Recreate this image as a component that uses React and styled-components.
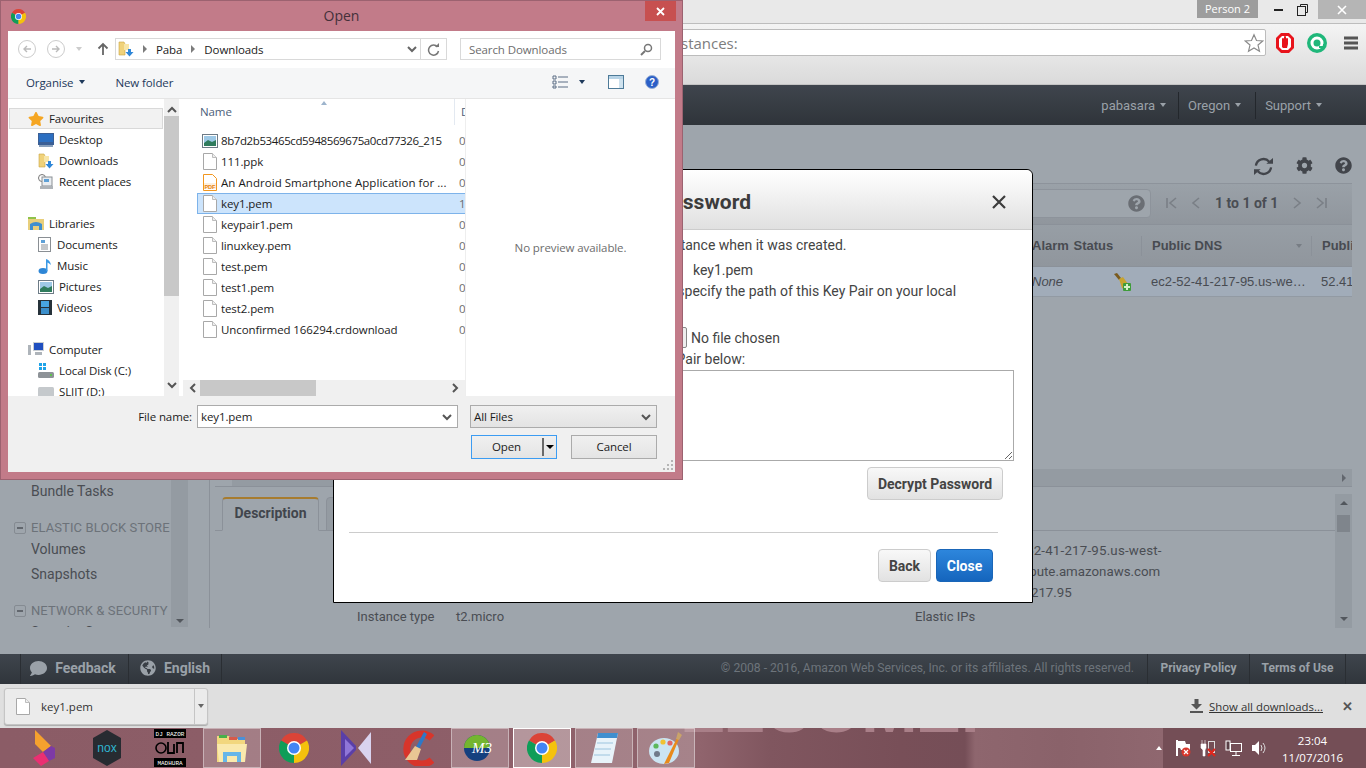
import styled, { createGlobalStyle } from 'styled-components';
import { FaCog, FaQuestionCircle, FaComment, FaGlobeAmericas, FaStar } from 'react-icons/fa';

const GlobalStyle = createGlobalStyle`
  html, body {
    margin: 0;
    padding: 0;
    overflow: hidden;
    background: #9ea5ac;
  }
`;

const Screen = styled.div`
  position: relative;
  width: 1366px;
  height: 768px;
  overflow: hidden;
  display: flex;
  flex-direction: column;
  font-family: Roboto, sans-serif;
`;

const IconGap = styled.span`
  display: flex;
  align-items: center;
  margin: ${p => p.$m || 0};
`;

/* ---------- browser chrome ---------- */

const TitleStrip = styled.div`
  height: 23px;
  background: #e9e9e9;
  display: flex;
  justify-content: flex-end;
  align-items: flex-start;
`;

const PersonBadge = styled.div`
  width: 61px;
  height: 18px;
  margin-right: 11px;
  background: #9d9d9d;
  color: #fff;
  font: 11px/18px 'Open Sans', sans-serif;
  text-align: center;
`;

const WinCtl = styled.div`
  width: ${p => p.$w}px;
  height: 19px;
  background: ${p => p.$bg || 'transparent'};
  display: flex;
  align-items: center;
  justify-content: center;
`;

const Toolbar = styled.div`
  height: 62px;
  border-top: 1px solid #bdbdbd;
  border-bottom: 1px solid #c4c4c4;
  box-sizing: border-box;
  background: linear-gradient(#f4f4f4, #dadada);
  display: flex;
  align-items: flex-start;
  padding-top: 5px;
`;

const AddressBar = styled.div`
  width: 1166px;
  height: 27px;
  margin-left: 100px;
  box-sizing: border-box;
  background: #fff;
  border: 1px solid #bcbcbc;
  border-radius: 2px;
  padding-left: 567px;
  display: flex;
  align-items: center;
  justify-content: space-between;
  color: #7d7d7d;
  font: 15px 'Open Sans', sans-serif;
`;

const ToolbarIcons = styled.div`
  display: flex;
  align-items: center;
  height: 27px;
  margin-left: 9px;
  gap: 12px;
`;

/* ---------- aws console ---------- */

const AwsHeader = styled.div`
  height: 40px;
  background: linear-gradient(#3f454d, #2f343a);
  display: flex;
  justify-content: flex-end;
  align-items: center;
  padding-right: 44px;
  color: #9aa1a8;
  font-size: 13px;
`;

const HeaderMenu = styled.div`
  display: flex;
  align-items: center;
  height: 27px;
  gap: 5px;
  padding-left: ${p => (p.$first ? 0 : 9)}px;
  margin-left: ${p => p.$ml || 12}px;
  border-left: ${p => (p.$first ? 'none' : '1px solid #23272c')};
`;

const Caret = styled.span`
  width: 0;
  height: 0;
  border-left: 3.5px solid transparent;
  border-right: 3.5px solid transparent;
  border-top: 4px solid ${p => p.$color || '#9aa1a8'};
`;

const AwsBody = styled.div`
  height: 529px;
  background: #9ea5ac;
  display: flex;
  align-items: flex-start;
`;

const Sidebar = styled.div`
  width: 188px;
  height: 502px;
  display: flex;
  flex-shrink: 0;
`;

const NavList = styled.div`
  width: 171px;
  height: 502px;
  overflow: hidden;
  box-sizing: border-box;
  padding-top: 354px;
  color: #4a4d53;
  font-size: 14px;
  white-space: nowrap;
`;

const NavLink = styled.div`
  height: 25px;
  line-height: 25px;
  padding-left: 31px;
`;

const NavGroup = styled.div`
  display: flex;
  align-items: center;
  height: 21px;
  box-sizing: border-box;
  padding: 2px 0 0 14px;
  margin-top: 12px;
  gap: 5px;
  color: #6c7279;
  font-size: 13px;
  letter-spacing: 0.1px;
`;

const Collapse = styled.span`
  width: 10px;
  height: 10px;
  border: 1px solid #858b92;
  border-radius: 2px;
  display: flex;
  align-items: center;
  justify-content: center;
  flex-shrink: 0;

  &::before {
    content: '';
    width: 6px;
    height: 2px;
    background: #62676e;
  }
`;

const NavScroll = styled.div`
  width: 17px;
  background: #949ba2;
  position: relative;

  &::after {
    content: '';
    position: absolute;
    left: 5px;
    bottom: 4px;
    border-left: 4px solid transparent;
    border-right: 4px solid transparent;
    border-top: 4px solid #52575d;
  }
`;

const Main = styled.div`
  width: 1143px;
  height: 503px;
  margin-left: 21px;
  border-left: 1px solid #8b9199;
  display: flex;
  flex-direction: column;
  box-sizing: border-box;
`;

const ActionBar = styled.div`
  height: 59px;
  flex-shrink: 0;
  box-sizing: border-box;
  border-bottom: 1px solid #8d939b;
  display: flex;
  justify-content: flex-end;
  align-items: flex-start;
  gap: 22px;
  padding-top: 32px;
  color: #42454b;
  font-size: 17px;
`;

const FilterBar = styled.div`
  height: 41px;
  flex-shrink: 0;
  box-sizing: border-box;
  background: linear-gradient(#9aa1a8, #90969d);
  border-bottom: 1px solid #8b9199;
  padding-bottom: 2px;
  display: flex;
  align-items: center;
`;

const SearchBox = styled.div`
  width: 941px;
  height: 29px;
  box-sizing: border-box;
  border: 1px solid #8d939b;
  border-radius: 4px;
  background: #9ea5ac;
  display: flex;
  justify-content: flex-end;
  align-items: center;
  padding-right: 5px;
  color: #6a6e74;
  font-size: 17px;
`;

const Pager = styled.div`
  display: flex;
  align-items: center;
  margin-left: 14px;
  color: #4a4d53;
  font: bold 14px Roboto, sans-serif;
`;

const PagerLabel = styled.span`
  margin: 0 12px;
`;

const PagerSvg = styled.svg`
  margin-right: ${p => p.$gap || 0}px;
`;

const TableGrid = styled.div`
  display: grid;
  grid-template-columns: 822px 109px 170px 40px;
  flex-shrink: 0;
  overflow: hidden;
  white-space: nowrap;
  font: 13px 'Liberation Sans', sans-serif;
  color: #484b51;
`;

const HeadRow = styled(TableGrid)`
  height: 42px;
  box-sizing: border-box;
  background: linear-gradient(#979ea5, #90969d);
  border-bottom: 1px solid #8b9199;
  font-weight: bold;
  align-items: center;
`;

const HeadCell = styled.div`
  height: 20px;
  line-height: 20px;
  padding-left: ${p => p.$pad || 0}px;
  border-left: ${p => (p.$line ? '1px solid #8b9199' : 'none')};
  display: flex;
  align-items: center;
  justify-content: space-between;
  padding-right: 9px;
  word-spacing: ${p => p.$spread || 0}px;
`;

const DataRow = styled(TableGrid)`
  height: 30px;
  box-sizing: border-box;
  background: #a1acb9;
  border-bottom: 1px solid #929aa3;
  align-items: center;
`;

const DataCell = styled.div`
  padding-left: ${p => p.$pad || 0}px;
  font-style: ${p => (p.$italic ? 'italic' : 'normal')};
  display: flex;
  align-items: center;
  justify-content: space-between;
  padding-right: ${p => p.$right || 0}px;
`;

const Spacer = styled.div`
  flex: 1;
`;

const TableScroll = styled.div`
  height: 18px;
  flex-shrink: 0;
  box-sizing: border-box;
  margin-left: 5px;
  padding-left: 17px;
  border-bottom: 1px solid #8b9199;
  display: flex;
`;

const TableScrollTrack = styled.div`
  flex: 1;
  background: #949ba2;
  display: flex;
  justify-content: flex-end;
  align-items: center;
  padding-right: 6px;

  &::after {
    content: '';
    border-top: 4px solid transparent;
    border-bottom: 4px solid transparent;
    border-left: 4px solid #62676e;
  }
`;

const LowerRow = styled.div`
  height: 141px;
  flex-shrink: 0;
  display: flex;
  box-sizing: border-box;
  padding: 7px 0 0 5px;
`;

const LowerContent = styled.div`
  flex: 1;
  display: flex;
  flex-direction: column;
  padding-top: 3px;
  min-width: 0;
`;

const TabStrip = styled.div`
  height: 34px;
  flex-shrink: 0;
  box-sizing: border-box;
  border-bottom: 1px solid #8b9199;
  padding-left: 7px;
  display: flex;
  gap: 7px;
`;

const Tab = styled.div`
  width: ${p => p.$w}px;
  height: 34px;
  box-sizing: border-box;
  border: 1px solid #8b9199;
  border-top: ${p => (p.$active ? '2px solid #a77c2f' : '1px solid #8b9199')};
  border-bottom: ${p => (p.$active ? '1px solid #9ea5ac' : '1px solid #8b9199')};
  border-radius: 4px 4px 0 0;
  background: ${p => (p.$active ? '#9ea5ac' : '#949ba2')};
  color: #41454c;
  font: 700 14px/28px Roboto, sans-serif;
  text-align: center;
  white-space: nowrap;
  overflow: hidden;
`;

const DetailGrid = styled.div`
  display: grid;
  grid-template-columns: 99px 459px 77px 1fr;
  grid-auto-rows: min-content;
  height: 97px;
  overflow: hidden;
  box-sizing: border-box;
  padding: 9px 0 0 142px;
  color: #4a4d53;
  font-size: 13px;
  line-height: 21px;
`;

const DetailValue = styled.div`
  font-size: 13.3px;
  white-space: nowrap;
  padding-left: ${p => p.$pad || 0}px;
  letter-spacing: ${p => p.$track || 0}px;
`;

const DetailLast = styled.div`
  line-height: 28px;
  font-size: 13px;
`;

const DetailScroll = styled.div`
  width: 17px;
  background: #949ba2;
  position: relative;
  display: flex;
  flex-direction: column;
  align-items: center;
  justify-content: space-between;
  padding: 7px 0;
  box-sizing: border-box;

  &::before {
    content: '';
    border-left: 4px solid transparent;
    border-right: 4px solid transparent;
    border-bottom: 4px solid #52575d;
  }

  &::after {
    content: '';
    border-left: 4px solid transparent;
    border-right: 4px solid transparent;
    border-top: 4px solid #52575d;
  }
`;

const DetailThumb = styled.div`
  position: absolute;
  left: 2px;
  top: 21px;
  width: 13px;
  height: 17px;
  background: #7f858c;
`;

const AwsFooter = styled.div`
  height: 30px;
  background: linear-gradient(#3f454d, #30353b);
  display: flex;
  align-items: center;
  padding: 0 20px;
  color: #9aa1a8;
  font-weight: 700;
  font-size: 14px;
`;

const FooterItem = styled.div`
  width: ${p => p.$w}px;
  height: 30px;
  box-sizing: border-box;
  padding: 0 ${p => p.$shift || 0}px 2px 0;
  border-left: 1px solid #2a2e33;
  border-right: ${p => (p.$end ? '1px solid #2a2e33' : 'none')};
  display: flex;
  align-items: center;
  justify-content: center;
  gap: 8px;
  font-size: ${p => p.$size || 14}px;
`;

const Copyright = styled.div`
  margin-left: auto;
  margin-right: 13px;
  padding-bottom: 2px;
  color: #6d747b;
  font-size: 12.15px;
  font-weight: 400;
`;

/* ---------- download shelf ---------- */

const DownloadBar = styled.div`
  height: 44px;
  background: #dfdfdf;
  display: flex;
  align-items: center;
  padding: 0 13px 0 4px;
  font: 11.5px 'Open Sans', sans-serif;
  color: #333;
`;

const DownloadChip = styled.div`
  width: 204px;
  height: 37px;
  box-sizing: border-box;
  background: #ebebeb;
  border: 1px solid #c5c5c5;
  border-radius: 3px;
  box-shadow: 0 1px 1px #aaa;
  display: flex;
  align-items: center;
  padding-left: 11px;
  gap: 11px;
`;

const ChipName = styled.span`
  flex: 1;
`;

const ChipArrow = styled.span`
  width: 12px;
  height: 100%;
  border-left: 1px solid #c5c5c5;
  display: flex;
  align-items: center;
  justify-content: center;
`;

const ShowAll = styled.a`
  margin-left: auto;
  display: flex;
  align-items: center;
  gap: 6px;
  color: #333;
  font-size: 11.4px;

  span {
    text-decoration: underline;
  }
`;

const ShelfClose = styled.span`
  margin-left: 19px;
  color: #555;
  font: bold 13px 'Liberation Sans', sans-serif;
`;

/* ---------- taskbar ---------- */

const Taskbar = styled.div`
  position: relative;
  height: 40px;
  overflow: hidden;
  padding-left: 15px;
  background: linear-gradient(90deg, #8b5c66 0, #8d5e68 430px, #90646d 700px, #80565f 770px, #784f58 900px, #754e57 965px, #8e666e 975px, #8a626a 1060px, #8f676f 1163px, #744e56 1163px);
  display: flex;
  align-items: center;
`;

const WallpaperText = styled.div`
  position: absolute;
  left: 680px;
  top: -46px;
  color: #a97f88;
  font: 900 68px/53px 'Liberation Sans', sans-serif;
  letter-spacing: -2px;
  white-space: nowrap;
`;

const TaskSlot = styled.div`
  position: relative;
  width: 58px;
  height: 40px;
  margin-right: ${p => p.$gap || 4}px;
  box-sizing: border-box;
  flex-shrink: 0;
  display: flex;
  align-items: center;
  justify-content: center;
  border: ${p => (p.$active ? '1px solid #fff' : p.$open ? '1px solid rgba(255,255,255,.4)' : 'none')};
  background: ${p => (p.$active ? 'rgba(255,255,255,.34)' : p.$open ? 'rgba(255,255,255,.2)' : 'transparent')};
`;

const Tray = styled.div`
  position: relative;
  margin-left: auto;
  width: 203px;
  height: 40px;
  display: flex;
  align-items: center;
`;

const TrayIcons = styled.div`
  display: flex;
  align-items: center;
  gap: 9px;
  margin-left: -7px;
`;

const TrayCaret = styled.span`
  border-left: 3.5px solid transparent;
  border-right: 3.5px solid transparent;
  border-bottom: 4px solid #fff;
  margin-right: 4px;
`;

const Clock = styled.div`
  margin-left: 15px;
  padding-top: 2px;
  color: #fff;
  font: 11.5px/17px 'Open Sans', sans-serif;
  text-align: center;
`;

/* ---------- aws modal ---------- */

const Modal = styled.div`
  position: absolute;
  left: 333px;
  top: 169px;
  width: 700px;
  height: 434px;
  box-sizing: border-box;
  background: #fff;
  border: 1px solid #000;
  border-radius: 0 6px 0 0;
  color: #444;
  font-size: 14px;
`;

const ModalHead = styled.div`
  height: 60px;
  box-sizing: border-box;
  padding-top: 4px;
  background: linear-gradient(#fff, #e0e0e0);
  border-bottom: 1px solid #ccc;
  border-radius: 0 6px 0 0;
  display: flex;
  align-items: center;
`;

const ModalTitle = styled.div`
  width: 417px;
  text-align: right;
  color: #3c3c3c;
  font: 700 21px Roboto, sans-serif;
  white-space: nowrap;
`;

const ModalX = styled.svg`
  margin-left: auto;
  margin-right: 26px;
`;

const ModalBody = styled.div`
  padding: 5px 18px 0 15px;
  display: flex;
  flex-direction: column;
`;

const Line = styled.div`
  height: 21px;
  line-height: 21px;
  margin-top: ${p => p.$top || 0}px;
  padding-left: ${p => p.$indent || 0}px;
  white-space: nowrap;
`;

const PairRow = styled.div`
  display: flex;
  align-items: center;
  height: 21px;
  box-sizing: border-box;
  padding-bottom: 2px;
  margin-top: ${p => p.$top || 0}px;
`;

const PairLabel = styled.div`
  width: ${p => p.$w}px;
`;

const ChooseFile = styled.button`
  width: 80px;
  height: 21px;
  margin-right: 4px;
  box-sizing: border-box;
  border: 1px solid #888;
  border-radius: 2px;
  background: #eee;
  font: 13px Roboto, sans-serif;
  padding: 0;
`;

const KeyText = styled.textarea`
  display: block;
  height: 91px;
  box-sizing: border-box;
  border: 1px solid #aaa;
  background: #fff;
  resize: vertical;
  outline: none;
`;

const AwsButton = styled.button`
  height: 33px;
  width: ${p => p.$w}px;
  box-sizing: border-box;
  padding: 0;
  border: 1px solid ${p => (p.$primary ? '#1a66b8' : '#ccc')};
  border-radius: 4px;
  background: ${p => (p.$primary ? 'linear-gradient(#2d86dc, #1565bd)' : 'linear-gradient(#f8f8f8, #e2e2e2)')};
  color: ${p => (p.$primary ? '#fff' : '#444')};
  font: 700 14px Roboto, sans-serif;
`;

const DecryptRow = styled.div`
  display: flex;
  justify-content: flex-end;
  margin: 6px 11px 0 0;
`;

const ModalRule = styled.div`
  height: 1px;
  margin: 32px 16px 0 0;
  background: #ccc;
`;

const ModalActions = styled.div`
  display: flex;
  justify-content: flex-end;
  gap: 5px;
  margin: 16px 21px 0 0;
`;

/* ---------- windows open dialog ---------- */

const OpenWindow = styled.div`
  position: absolute;
  left: 0;
  top: 0;
  width: 683px;
  height: 480px;
  box-sizing: border-box;
  background: #c27b89;
  border: 1px solid #9c6270;
  padding: 0 7px 7px;
  display: flex;
  flex-direction: column;
  font-family: 'Open Sans', sans-serif;
  font-size: 11.5px;
  letter-spacing: -0.1px;
  color: #1b1b1b;
`;

const WinTitle = styled.div`
  position: relative;
  height: 30px;
  flex-shrink: 0;
  box-sizing: border-box;
  padding-bottom: 2px;
  display: flex;
  align-items: center;
  justify-content: center;
  color: #44303a;
  font-size: 14px;
  letter-spacing: 0;
`;

const WinLogo = styled.span`
  position: absolute;
  left: 3px;
  top: 8px;
  display: flex;
`;

const WinClose = styled.div`
  position: absolute;
  right: -1px;
  top: 0;
  width: 31px;
  height: 20px;
  background: #c75050;
  display: flex;
  align-items: center;
  justify-content: center;
`;

const WinContent = styled.div`
  flex: 1;
  min-height: 0;
  background: #fff;
  display: flex;
  flex-direction: column;
`;

const AddressRow = styled.div`
  height: 37px;
  flex-shrink: 0;
  box-sizing: border-box;
  display: flex;
  align-items: center;
  padding: 0 0 1px 10px;
`;

const NavCircle = styled.span`
  width: 18px;
  height: 18px;
  margin-right: 11px;
  box-sizing: border-box;
  border: 1px solid #ccc;
  border-radius: 50%;
  display: flex;
  align-items: center;
  justify-content: center;
`;

const Crumbs = styled.div`
  width: 332px;
  height: 22px;
  margin-left: 6px;
  box-sizing: border-box;
  border: 1px solid #d9d9d9;
  display: flex;
  align-items: center;
  padding-left: 2px;
  gap: 9px;
`;

const CrumbArrow = styled.span`
  border-top: 4px solid transparent;
  border-bottom: 4px solid transparent;
  border-left: 4px solid #7c7c7c;
`;

const CrumbEnd = styled.span`
  width: 25px;
  height: 20px;
  display: flex;
  align-items: center;
  justify-content: center;
  border-left: 1px solid #d9d9d9;
`;

const SearchField = styled.div`
  width: 201px;
  height: 22px;
  margin-left: 13px;
  box-sizing: border-box;
  border: 1px solid #d9d9d9;
  display: flex;
  align-items: center;
  justify-content: space-between;
  padding: 0 7px 0 8px;
  color: #6d6d6d;
`;

const CommandBar = styled.div`
  height: 31px;
  flex-shrink: 0;
  box-sizing: border-box;
  background: #f5f6f7;
  border-bottom: 1px solid #e5e5e5;
  display: flex;
  align-items: center;
  color: #1e395b;
  padding: 0 0 2px 18px;
`;

const CommandItem = styled.span`
  display: flex;
  align-items: center;
  gap: 6px;
  margin-right: 30px;
`;

const CommandIcons = styled.div`
  margin-left: auto;
  display: flex;
  align-items: center;
  padding-right: 16px;
`;

const Panes = styled.div`
  flex: 1;
  min-height: 0;
  display: flex;
`;

const NavPane = styled.div`
  width: 156px;
  flex-shrink: 0;
  overflow: hidden;
  padding-top: 9px;
  box-sizing: border-box;
`;

const NavEntry = styled.div`
  height: 21px;
  box-sizing: border-box;
  margin: ${p => p.$gap || 0}px 1px 0;
  display: flex;
  align-items: center;
  padding-left: ${p => (p.$top ? 18 : 28)}px;
  gap: 5px;
  background: ${p => (p.$selected ? '#f2f2f2' : 'transparent')};
  border: 1px solid ${p => (p.$selected ? '#d9d9d9' : 'transparent')};
  white-space: nowrap;
`;

const VScroll = styled.div`
  width: 15px;
  flex-shrink: 0;
  background: #f0f0f0;
  position: relative;
  display: flex;
  flex-direction: column;
  align-items: center;
  justify-content: space-between;
  padding: 6px 0;
  box-sizing: border-box;
`;

const VThumb = styled.div`
  position: absolute;
  left: 0;
  top: 17px;
  width: 15px;
  height: 180px;
  background: #c8c8c8;
`;

const FilePane = styled.div`
  width: 283px;
  margin-left: 4px;
  flex-shrink: 0;
  border-right: 1px solid #eee;
  display: flex;
  flex-direction: column;
  box-sizing: border-box;
`;

const FileHead = styled.div`
  position: relative;
  height: 31px;
  flex-shrink: 0;
  display: flex;
  padding-left: 17px;
  color: #4c607a;
  line-height: 25px;
`;

const HeadDivider = styled.span`
  position: absolute;
  left: 271px;
  top: 0;
  width: 11px;
  height: 26px;
  box-sizing: border-box;
  border-left: 1px solid #e3e9f1;
  padding-left: 6px;
  overflow: hidden;
`;

const SortMark = styled.span`
  position: absolute;
  left: 138px;
  top: 2px;
  border-left: 3.5px solid transparent;
  border-right: 3.5px solid transparent;
  border-bottom: 4px solid #9db4cc;
`;

const FileList = styled.div`
  flex: 1;
  min-height: 0;
`;

const FileRow = styled.div`
  height: 21px;
  box-sizing: border-box;
  margin-left: 14px;
  display: flex;
  align-items: center;
  padding-left: 4px;
  background: ${p => (p.$selected ? '#cce4fc' : 'transparent')};
  border: 1px solid ${p => (p.$selected ? '#7db3ea' : 'transparent')};
  border-right: none;
  overflow: hidden;
  white-space: nowrap;
`;

const FileGlyph = styled.span`
  width: 16px;
  flex-shrink: 0;
  display: flex;
  justify-content: center;
`;

const FileName = styled.span`
  width: 238px;
  flex-shrink: 0;
  margin-left: 3px;
  overflow: hidden;
  letter-spacing: ${p => p.$spacing ?? -0.1}px;
`;

const FileDate = styled.span`
  color: #6d6d6d;
`;

const HScroll = styled.div`
  position: relative;
  height: 16px;
  flex-shrink: 0;
  background: #f0f0f0;
  display: flex;
  align-items: center;
  justify-content: space-between;
  padding: 0 5px;
  box-sizing: border-box;
`;

const HThumb = styled.div`
  position: absolute;
  left: 17px;
  top: 0;
  width: 116px;
  height: 16px;
  background: #c8c8c8;
`;

const PreviewPane = styled.div`
  flex: 1;
  text-align: center;
  color: #6d6d6d;
  padding-top: 141px;
  box-sizing: border-box;
`;

const BottomPanel = styled.div`
  position: relative;
  height: 76px;
  flex-shrink: 0;
  box-sizing: border-box;
  background: #f0f0f0;
  padding: 9px 18px 0 0;
`;

const PanelRow = styled.div`
  display: flex;
  justify-content: flex-end;
  align-items: center;
  gap: ${p => p.$gap || 12}px;
  margin-top: ${p => p.$top || 0}px;
`;

const FileNameInput = styled.div`
  width: 261px;
  height: 23px;
  margin-left: -7px;
  box-sizing: border-box;
  background: #fff;
  border: 1px solid #ababab;
  display: flex;
  align-items: center;
  justify-content: space-between;
  padding: 0 5px 0 3px;
`;

const FilterSelect = styled.div`
  width: 187px;
  height: 23px;
  box-sizing: border-box;
  background: linear-gradient(#f0f0f0, #e3e3e3);
  border: 1px solid #ababab;
  display: flex;
  align-items: center;
  justify-content: space-between;
  padding: 0 5px 0 3px;
`;

const DlgButton = styled.div`
  position: relative;
  width: 86px;
  height: 24px;
  box-sizing: border-box;
  background: linear-gradient(#f0f0f0, #e4e4e4);
  border: 1px solid ${p => (p.$focus ? '#3c9cf2' : '#ababab')};
  display: flex;
  align-items: center;
  justify-content: center;
  padding: 0 ${p => (p.$focus ? 15 : 0)}px 2px 0;
`;

const SplitMark = styled.span`
  position: absolute;
  right: 0;
  top: 2px;
  bottom: 2px;
  width: 12px;
  border-left: 2px solid #6a6a6a;
  display: flex;
  align-items: center;
  justify-content: center;

  &::after {
    content: '';
    border-left: 4px solid transparent;
    border-right: 4px solid transparent;
    border-top: 4px solid #000;
  }
`;

const Grip = styled.svg`
  position: absolute;
  right: 2px;
  bottom: 2px;
`;

/* ---------- drawings ---------- */

const Chevron = ({ dir = 'down', color = '#555', size = 10 }) => {
  const d = { down: 'M1 3l4 4 4-4', up: 'M1 7l4-4 4 4', left: 'M7 1L3 5l4 4', right: 'M3 1l4 4-4 4' }[dir];
  return (
    <svg width={size} height={size} viewBox="0 0 10 10"><path d={d} fill="none" stroke={color} strokeWidth="2" /></svg>
  );
};

const ChromeLogo = ({ size = 16 }) => (
  <svg width={size} height={size} viewBox="0 0 24 24">
    <path fill="#db4437" d="M12 12L1.6 6A12 12 0 0 1 22.4 6Z" />
    <path fill="#0f9d58" d="M12 12L1.6 6A12 12 0 0 0 12 24Z" />
    <path fill="#f4c20d" d="M12 12L22.4 6A12 12 0 0 1 12 24Z" />
    <circle cx="12" cy="12" r="5.6" fill="#fff" />
    <circle cx="12" cy="12" r="4.4" fill="#4285f4" />
  </svg>
);

const DocIcon = () => (
  <svg width="14" height="17" viewBox="0 0 14 17">
    <path d="M.5.5h9l4 4v12H.5z" fill="#fff" stroke="#a8a8a8" />
    <path d="M9.500.5v4h4" fill="#eee" stroke="#bdbdbd" />
  </svg>
);

const PdfIcon = () => (
  <svg width="14" height="17" viewBox="0 0 14 17">
    <path d="M.5.5h9l4 4v12H.5z" fill="#fff" stroke="#f2971f" />
    <rect x="1" y="9" width="12" height="6" fill="#fdf1df" />
    <text x="1.4" y="14.6" fontSize="5.6" fontWeight="700" fontFamily="Liberation Sans" fill="#e8820c">PDF</text>
  </svg>
);

const ImageIcon = () => (
  <svg width="16" height="14" viewBox="0 0 16 14">
    <rect x=".5" y=".5" width="15" height="13" fill="#fff" stroke="#6d7b86" />
    <rect x="2" y="2" width="12" height="10" fill="#9ec9e6" />
    <path d="M2 9l4-3 4 2 4-2v6H2z" fill="#2f7c5d" />
  </svg>
);

const FolderDown = ({ size = 16 }) => (
  <svg width={size} height={size} viewBox="0 0 16 16">
    <path d="M1 1h5l1 2v11H1z" fill="#f0d27a" stroke="#c9a645" strokeWidth=".6" />
    <path d="M6 3h5v6H6z" fill="#f7e5a8" />
    <path d="M10 8h3v3h2.500l-4 4.500-4-4.500H10z" fill="#2f87d8" />
  </svg>
);

const NavIcon = ({ kind }) => {
  switch (kind) {
    case 'star':
      return <FaStar size={16} color="#f5a623" />;
    case 'desktop':
      return <svg width="16" height="14" viewBox="0 0 16 14"><rect width="16" height="12" fill="#3b5f95" /><rect x="1" y="1" width="14" height="8" fill="#2c6fc1" /><rect x="1" y="12" width="14" height="2" fill="#89a0bc" /></svg>;
    case 'download':
      return <FolderDown />;
    case 'recent':
      return <svg width="16" height="16" viewBox="0 0 16 16"><circle cx="4" cy="4" r="3.5" fill="#fff" stroke="#777" /><rect x="4" y="3" width="10" height="9" fill="#e9edf1" stroke="#8a8f94" /><rect x="6" y="5" width="5" height="3" fill="#5ea0d6" /><rect x="2" y="12" width="13" height="3" fill="#aeb3b8" /></svg>;
    case 'library':
      return <svg width="16" height="15" viewBox="0 0 16 15"><path d="M0 2h6l1 1h9v11H0z" fill="#e8cf7c" /><rect y="1" width="8" height="2" fill="#8fc24a" /><path d="M2 14V8q6-4 12 0v6h-3V10H5v4z" fill="#3f8fcf" /></svg>;
    case 'docs':
      return <svg width="14" height="15" viewBox="0 0 14 15"><rect x=".5" y=".5" width="12" height="14" fill="#fff" stroke="#8a8f94" /><rect x="3" y="3" width="4" height="3" fill="#5ea0d6" /><path d="M3 8h7M3 10h7M3 12h7" stroke="#8a8f94" /></svg>;
    case 'music':
      return <svg width="14" height="16" viewBox="0 0 14 16"><ellipse cx="5" cy="13" rx="4.5" ry="3" fill="#2d86d6" /><path d="M8 13V1q4 1 5 6-2-2-3.5-2.5V13z" fill="#3b9ae6" /></svg>;
    case 'pictures':
      return <ImageIcon />;
    case 'videos':
      return <svg width="14" height="15" viewBox="0 0 14 15"><rect width="14" height="15" fill="#26323a" /><rect x="3" y="1" width="8" height="6" fill="#48a6e2" /><rect x="3" y="8" width="8" height="6" fill="#3b8fcb" /></svg>;
    case 'computer':
      return <svg width="16" height="15" viewBox="0 0 16 15"><rect x="5" y="0" width="11" height="9" fill="#c9ced3" /><rect x="6" y="1" width="9" height="7" fill="#1f4fc0" /><rect x="0" y="3" width="3" height="10" fill="#aeb4ba" /><rect x="7" y="10" width="7" height="3" fill="#aeb4ba" /></svg>;
    case 'disk':
      return <svg width="16" height="16" viewBox="0 0 16 16"><rect x="1" y="0" width="3" height="3" fill="#1fa3e8" /><rect x="5" y="0" width="3" height="3" fill="#1fa3e8" /><rect x="1" y="4" width="3" height="3" fill="#1fa3e8" /><rect x="5" y="4" width="3" height="3" fill="#1fa3e8" /><rect y="9" width="16" height="6" rx="1.5" fill="#8d9297" /><rect x="12" y="11" width="2" height="2" fill="#5ec14d" /></svg>;
    default:
      return <svg width="16" height="16" viewBox="0 0 16 16"><rect y="3" width="16" height="12" rx="1.5" fill="#c5c9cc" /></svg>;
  }
};

const RefreshIcon = () => (
  <svg width="21" height="19" viewBox="0 0 22 20">
    <path d="M3 9a8 8 0 0 1 14-4" fill="none" stroke="#42454b" strokeWidth="2.400" />
    <path d="M19 11a8 8 0 0 1-14 4" fill="none" stroke="#42454b" strokeWidth="2.400" />
    <path d="M14 7h7V1zM8 13H1v6z" fill="#42454b" />
  </svg>
);

const PagerIcon = ({ d, gap = 0 }) => (
  <PagerSvg width="14" height="14" viewBox="0 0 14 14" $gap={gap}>
    <path d={d} fill="none" stroke="#7a7f86" strokeWidth="1.600" />
  </PagerSvg>
);

const BroomIcon = () => (
  <svg width="17" height="18" viewBox="0 0 17 18">
    <path d="M0 1l3-1 4 5-2 2z" fill="#7a5a1d" />
    <path d="M5 6l4-2 5 7-4 5-2-1z" fill="#c8a32e" />
    <rect x="9" y="10" width="8" height="8" rx="1" fill="#3f9c3a" />
    <path d="M13 11v6M10 14h6" stroke="#d7f0c8" strokeWidth="2" />
  </svg>
);

const Ubiquitous = () => (
  <svg width="24" height="36" viewBox="0 0 24 36">
    <path d="M3 0l16 16-8 6L3 14z" fill="#f5a12e" />
    <path d="M11 22l8-6 4 2v10l-6 3z" fill="#7d3aa6" />
    <path d="M1 28l10-6 6 9-8 5z" fill="#ea2f72" />
  </svg>
);

const NoxIcon = () => (
  <svg width="28" height="36" viewBox="0 0 28 36">
    <path d="M14 0l14 8v20l-14 8L0 28V8z" fill="#272b31" />
    <text x="14" y="22" textAnchor="middle" fontSize="12" fontFamily="Liberation Sans" fill="#2fb5d0">nox</text>
  </svg>
);

const RazorIcon = () => (
  <svg width="32" height="38" viewBox="0 0 32 38">
    <rect width="32" height="9" fill="#000" />
    <rect y="29" width="32" height="9" fill="#000" />
    <text x="16" y="7" textAnchor="middle" fontSize="6" fontFamily="Liberation Mono" fill="#fff">DJ RAZOR</text>
    <text x="16" y="36" textAnchor="middle" fontSize="6" fontFamily="Liberation Mono" fill="#fff">MADHURA</text>
    <circle cx="7" cy="19" r="5" fill="none" stroke="#000" strokeWidth="1.600" />
    <path d="M14 13v11h6V15M23 24V14h6v10" fill="none" stroke="#000" strokeWidth="1.800" />
  </svg>
);

const ExplorerIcon = () => (
  <svg width="32" height="32" viewBox="0 0 32 32">
    <path d="M1 4h12l2 3h14v23H1z" fill="#f2d77e" />
    <rect x="3" y="3" width="8" height="3" fill="#48b04a" />
    <rect x="13" y="5" width="8" height="3" fill="#d85a4a" />
    <rect x="22" y="5" width="7" height="3" fill="#4a90d8" />
    <path d="M1 12h30l-2 18H3z" fill="#fae9ad" />
    <path d="M7 30V20h18v10h-4v-6H11v6z" fill="#66b6e8" />
  </svg>
);

const VsIcon = () => (
  <svg width="30" height="36" viewBox="0 0 30 36">
    <path d="M0 0l15 16v4L0 36z" fill="#5a3fa8" />
    <path d="M30 2L17 18l13 16z" fill="#d9d3ef" />
    <path d="M4 9l9 9-9 9z" fill="#8f76d8" />
  </svg>
);

const CcleanerIcon = () => (
  <svg width="32" height="36" viewBox="0 0 32 36">
    <path d="M30 8A15 15 0 1 0 30 30" fill="none" stroke="#d8352b" strokeWidth="7" />
    <path d="M22 2l3 2-8 15-3-2z" fill="#2e78c7" />
    <path d="M13 16l6 3-4 11-12 0z" fill="#e9c794" />
  </svg>
);

const M3Icon = () => (
  <svg width="32" height="28" viewBox="0 0 32 28">
    <circle cx="13" cy="14" r="13" fill="#15407f" />
    <path d="M0 14a13 13 0 0 1 26 0z" fill="#74b52f" />
    <text x="8" y="19" fontSize="15" fontStyle="italic" fontFamily="Liberation Serif" fill="#fff">M3</text>
  </svg>
);

const NotepadIcon = () => (
  <svg width="28" height="34" viewBox="0 0 28 34">
    <path d="M8 2h20l-6 30H1z" fill="#e8f3fa" />
    <path d="M8 2h20l-1 5H7z" fill="#3f8fcf" />
    <path d="M7 12h16M5 18h16M4 24h16" stroke="#9cc4de" />
  </svg>
);

const PaintIcon = () => (
  <svg width="34" height="34" viewBox="0 0 34 34">
    <ellipse cx="15" cy="20" rx="15" ry="13" fill="#cbe4f2" />
    <circle cx="7" cy="15" r="2.6" fill="#5cb85c" />
    <circle cx="14" cy="11" r="2.6" fill="#f1c232" />
    <circle cx="21" cy="12" r="2.6" fill="#e06666" />
    <circle cx="8" cy="23" r="3" fill="#707a8a" />
    <path d="M15 33l13-26 2 1-10 24z" fill="#e88a1c" />
    <path d="M27 8l2-7 4 3-3 5z" fill="#c9a36a" />
  </svg>
);

const TrayFlag = () => (
  <svg width="16" height="18" viewBox="0 0 16 18">
    <path d="M2 1v16" stroke="#fff" strokeWidth="2" />
    <path d="M3 2h7l1 3h4v6H6L5 9H3z" fill="#fff" />
    <circle cx="11" cy="13" r="4.5" fill="#d9362b" />
    <path d="M9 11l4 4M13 11l-4 4" stroke="#fff" strokeWidth="1.200" />
  </svg>
);

const TrayPower = () => (
  <svg width="16" height="18" viewBox="0 0 16 18">
    <path d="M2 1v4M5 1v4M1 5h5v4l-1 2v6H3v-6L1 9z" fill="#fff" stroke="#fff" strokeWidth=".6" />
    <rect x="8.5" y="2.5" width="6" height="11" fill="none" stroke="#ddd" />
    <path d="M8 10l7 7M15 10l-7 7" stroke="#e0261c" strokeWidth="2" />
  </svg>
);

const TrayNet = () => (
  <svg width="17" height="17" viewBox="0 0 17 17">
    <rect x="5.5" y="3.5" width="11" height="8" fill="none" stroke="#fff" />
    <path d="M11 12v3M7 15.500h8" stroke="#fff" />
    <rect x="1" y="1" width="4" height="9" fill="#5a4047" stroke="#fff" />
  </svg>
);

const TraySpeaker = () => (
  <svg width="16" height="16" viewBox="0 0 16 16">
    <path d="M1 5h3l4-4v14l-4-4H1z" fill="#fff" />
    <path d="M10 5q2 3 0 6M12 3q4 5 0 10" fill="none" stroke="#ddd" />
  </svg>
);

/* ---------- data ---------- */

const navEntries = [
  { label: 'Favourites', icon: 'star', top: true, selected: true },
  { label: 'Desktop', icon: 'desktop' },
  { label: 'Downloads', icon: 'download' },
  { label: 'Recent places', icon: 'recent' },
  { label: 'Libraries', icon: 'library', top: true, gap: 21 },
  { label: 'Documents', icon: 'docs' },
  { label: 'Music', icon: 'music' },
  { label: 'Pictures', icon: 'pictures' },
  { label: 'Videos', icon: 'videos' },
  { label: 'Computer', icon: 'computer', top: true, gap: 21 },
  { label: 'Local Disk (C:)', icon: 'disk' },
  { label: 'SLIIT (D:)', icon: 'other' },
];

const files = [
  { name: '8b7d2b53465cd5948569675a0cd77326_215', icon: 'image', spacing: -0.4 },
  { name: '111.ppk' },
  { name: 'An Android Smartphone Application for ...', icon: 'pdf', spacing: 0.05 },
  { name: 'key1.pem', selected: true, date: '1' },
  { name: 'keypair1.pem' },
  { name: 'linuxkey.pem' },
  { name: 'test.pem' },
  { name: 'test1.pem' },
  { name: 'test2.pem' },
  { name: 'Unconfirmed 166294.crdownload' },
];

const fileIcon = kind => {
  if (kind === 'image') return <ImageIcon />;
  if (kind === 'pdf') return <PdfIcon />;
  return <DocIcon />;
};

export default function App() {
  return (
    <Screen>
      <GlobalStyle />

      <TitleStrip>
        <PersonBadge>Person 2</PersonBadge>
        <WinCtl $w={18}>
          <svg width="9" height="3"><rect width="9" height="2" y="1" fill="#222" /></svg>
        </WinCtl>
        <WinCtl $w={31}>
          <svg width="11" height="12" viewBox="0 0 11 12"><path d="M3.500 2.500v-2h7v8h-2" fill="none" stroke="#222" /><rect x=".5" y="2.5" width="8" height="9" fill="none" stroke="#222" /></svg>
        </WinCtl>
        <WinCtl $w={48} $bg="#b5b5b5">
          <svg width="10" height="10" viewBox="0 0 10 10"><path d="M1 1l8 8M9 1l-8 8" stroke="#fff" strokeWidth="1.600" /></svg>
        </WinCtl>
      </TitleStrip>

      <Toolbar>
        <AddressBar>
          <span>instances:</span>
          <IconGap $m="0 1px 0 0">
            <svg width="20" height="20" viewBox="0 0 24 24">
              <path d="M12 2l3 7 7.500.6-5.700 4.900 1.800 7.500L12 18l-6.600 4 1.800-7.500L1.500 9.600 9 9z" fill="#fff" stroke="#8a8a8a" strokeWidth="1.400" />
            </svg>
          </IconGap>
        </AddressBar>
        <ToolbarIcons>
          <svg width="20" height="22" viewBox="0 0 20 22">
            <path d="M6 1h8l5 5v10l-5 5H6l-5-5V6z" fill="#e8141c" />
            <path d="M7 4h6l3 3v8l-3 3H7l-3-3V7z" fill="#fff" />
            <path d="M7 15V7q0-1 1-1t1 1V5q0-1 1-1t1 1v2q0-1 1-1t1 1v5l-1 4H8z" fill="#e8141c" />
          </svg>
          <svg width="20" height="20" viewBox="0 0 20 20">
            <circle cx="10" cy="10" r="10" fill="#1fb77a" />
            <circle cx="10" cy="10" r="5" fill="none" stroke="#fff" strokeWidth="3" />
            <path d="M12 14h5v-3" fill="none" stroke="#1fb77a" strokeWidth="2" />
          </svg>
          <IconGap $m="0 0 0 5px">
            <svg width="14" height="14" viewBox="0 0 14 14">
              <path d="M0 2h14M0 7h14M0 12h14" stroke="#555" strokeWidth="3" />
            </svg>
          </IconGap>
        </ToolbarIcons>
      </Toolbar>

      <AwsHeader>
        <HeaderMenu $first>pabasara <Caret /></HeaderMenu>
        <HeaderMenu>Oregon <Caret /></HeaderMenu>
        <HeaderMenu $ml={14}>Support <Caret /></HeaderMenu>
      </AwsHeader>

      <AwsBody>
        <Sidebar>
          <NavList>
            <NavLink>Bundle Tasks</NavLink>
            <NavGroup><Collapse />ELASTIC BLOCK STORE</NavGroup>
            <NavLink>Volumes</NavLink>
            <NavLink>Snapshots</NavLink>
            <NavGroup><Collapse />NETWORK &amp; SECURITY</NavGroup>
            <NavLink>Security Groups</NavLink>
          </NavList>
          <NavScroll />
        </Sidebar>

        <Main>
          <ActionBar>
            <RefreshIcon />
            <FaCog />
            <FaQuestionCircle />
          </ActionBar>
          <FilterBar>
            <SearchBox><FaQuestionCircle /></SearchBox>
            <Pager>
              <PagerIcon d="M2 2v10M11 2L5 7l6 5" gap={10} />
              <PagerIcon d="M10 2L4 7l6 5" />
              <PagerLabel>1 to 1 of 1</PagerLabel>
              <PagerIcon d="M4 2l6 5-6 5" gap={10} />
              <PagerIcon d="M12 2v10M3 2l6 5-6 5" />
            </Pager>
          </FilterBar>
          <HeadRow>
            <HeadCell />
            <HeadCell $spread={1}>Alarm Status</HeadCell>
            <HeadCell $line $pad={10}>Public DNS <Caret $color="#777d84" /></HeadCell>
            <HeadCell $line $pad={10}>Public IP</HeadCell>
          </HeadRow>
          <DataRow>
            <DataCell />
            <DataCell $italic $right={10}>None <BroomIcon /></DataCell>
            <DataCell $pad={10}>ec2-52-41-217-95.us-we…</DataCell>
            <DataCell $pad={10}>52.41.217.95</DataCell>
          </DataRow>
          <Spacer />
          <TableScroll><TableScrollTrack /></TableScroll>
          <LowerRow>
            <LowerContent>
              <TabStrip>
                <Tab $active $w={97}>Description</Tab>
                <Tab $w={140}>Status Checks</Tab>
              </TabStrip>
              <DetailGrid>
                <div>Instance ID</div>
                <div>i-0a1b2c3d</div>
                <div>Public DNS</div>
                <div>
                  <DetailValue $pad={8} $track={0.2}>ec2-52-41-217-95.us-west-</DetailValue>
                  <DetailValue>2.compute.amazonaws.com</DetailValue>
                </div>
                <div>Instance state</div>
                <div>running</div>
                <div>Public IP</div>
                <DetailValue $pad={2}>52.41.217.95</DetailValue>
                <DetailLast>Instance type</DetailLast>
                <DetailLast>t2.micro</DetailLast>
                <DetailLast>Elastic IPs</DetailLast>
                <DetailLast />
              </DetailGrid>
            </LowerContent>
            <DetailScroll><DetailThumb /></DetailScroll>
          </LowerRow>
        </Main>
      </AwsBody>

      <AwsFooter>
        <FooterItem $w={108} $shift={3}><FaComment size={17} /> Feedback</FooterItem>
        <FooterItem $w={94} $end><FaGlobeAmericas size={16} /> English</FooterItem>
        <Copyright>© 2008 - 2016, Amazon Web Services, Inc. or its affiliates. All rights reserved.</Copyright>
        <FooterItem $w={102} $size={12}>Privacy Policy</FooterItem>
        <FooterItem $w={97} $size={12} $end>Terms of Use</FooterItem>
      </AwsFooter>

      <DownloadBar>
        <DownloadChip>
          <DocIcon />
          <ChipName>key1.pem</ChipName>
          <ChipArrow><Caret $color="#666" /></ChipArrow>
        </DownloadChip>
        <ShowAll>
          <svg width="13" height="14" viewBox="0 0 13 14"><path d="M4.500 0h4v5h3.500l-5.500 5.500L1 5h3.500zM0 12h13v2H0z" fill="#555" /></svg>
          <span>Show all downloads...</span>
        </ShowAll>
        <ShelfClose>✕</ShelfClose>
      </DownloadBar>

      <Taskbar>
        <WallpaperText>ELCOME!</WallpaperText>
        <TaskSlot $gap={5}><Ubiquitous /></TaskSlot>
        <TaskSlot $gap={5}><NoxIcon /></TaskSlot>
        <TaskSlot><RazorIcon /></TaskSlot>
        <TaskSlot $open><ExplorerIcon /></TaskSlot>
        <TaskSlot><ChromeLogo size={30} /></TaskSlot>
        <TaskSlot><VsIcon /></TaskSlot>
        <TaskSlot><CcleanerIcon /></TaskSlot>
        <TaskSlot $open><M3Icon /></TaskSlot>
        <TaskSlot $open $active><ChromeLogo size={30} /></TaskSlot>
        <TaskSlot $open><NotepadIcon /></TaskSlot>
        <TaskSlot $open><PaintIcon /></TaskSlot>
        <Tray>
          <TrayIcons>
            <TrayCaret />
            <TrayFlag />
            <TrayPower />
            <TrayNet />
            <TraySpeaker />
          </TrayIcons>
          <Clock>23:04<br />11/07/2016</Clock>
        </Tray>
      </Taskbar>

      <Modal>
        <ModalHead>
          <ModalTitle>Retrieve Default Windows Password</ModalTitle>
          <ModalX width="14" height="14" viewBox="0 0 14 14">
            <path d="M1 1l12 12M13 1L1 13" stroke="#3c3c3c" strokeWidth="2.200" />
          </ModalX>
        </ModalHead>
        <ModalBody>
          <Line $indent={15}>The following Key Pair was associated with this instance when it was created.</Line>
          <PairRow $top={4}><PairLabel $w={344}>Key Name</PairLabel>key1.pem</PairRow>
          <Line $indent={17}>In order to retrieve your password you will need to specify the path of this Key Pair on your local</Line>
          <Line>machine:</Line>
          <PairRow $top={5}>
            <PairLabel $w={258}>Key Pair Path:</PairLabel>
            <ChooseFile>Choose File</ChooseFile>
            No file chosen
          </PairRow>
          <Line $indent={13}>Or you can copy and paste the contents of the Key Pair below:</Line>
          <KeyText readOnly />
          <DecryptRow><AwsButton $w={136}>Decrypt Password</AwsButton></DecryptRow>
          <ModalRule />
          <ModalActions>
            <AwsButton $w={53}>Back</AwsButton>
            <AwsButton $w={57} $primary>Close</AwsButton>
          </ModalActions>
        </ModalBody>
      </Modal>

      <OpenWindow>
        <WinTitle>
          <WinLogo><ChromeLogo size={15} /></WinLogo>
          Open
          <WinClose>
            <svg width="9" height="9" viewBox="0 0 9 9"><path d="M1 1l7 7M8 1L1 8" stroke="#fff" strokeWidth="1.800" /></svg>
          </WinClose>
        </WinTitle>
        <WinContent>
          <AddressRow>
            <NavCircle><svg width="10" height="10" viewBox="0 0 10 10"><path d="M9 5H2M5 2L2 5l3 3" fill="none" stroke="#bbb" strokeWidth="1.400" /></svg></NavCircle>
            <NavCircle><svg width="10" height="10" viewBox="0 0 10 10"><path d="M1 5h7M5 2l3 3-3 3" fill="none" stroke="#bbb" strokeWidth="1.400" /></svg></NavCircle>
            <Caret $color="#ccc" />
            <IconGap $m="0 0 0 15px">
              <svg width="12" height="14" viewBox="0 0 12 14"><path d="M6 13V2M1.500 6.500L6 2l4.500 4.500" fill="none" stroke="#666" strokeWidth="1.800" /></svg>
            </IconGap>
            <Crumbs>
              <FolderDown />
              <CrumbArrow />
              Paba
              <CrumbArrow />
              Downloads
              <IconGap $m="0 -6px 0 auto">
                <Chevron color="#666" />
              </IconGap>
              <CrumbEnd>
                <svg width="13" height="13" viewBox="0 0 13 13"><path d="M10.500 4A5 5 0 1 0 11.500 8" fill="none" stroke="#777" strokeWidth="1.500" /><path d="M8 4h4V0z" fill="#777" /></svg>
              </CrumbEnd>
            </Crumbs>
            <SearchField>
              Search Downloads
              <svg width="13" height="13" viewBox="0 0 13 13"><circle cx="8" cy="5" r="3.500" fill="none" stroke="#777" strokeWidth="1.500" /><path d="M5 8l-4 4" stroke="#777" strokeWidth="2" /></svg>
            </SearchField>
          </AddressRow>

          <CommandBar>
            <CommandItem>Organise <Caret $color="#1e395b" /></CommandItem>
            <CommandItem>New folder</CommandItem>
            <CommandIcons>
              <IconGap $m="0 11px 0 0">
                <svg width="16" height="14" viewBox="0 0 16 14">
                  <path d="M1 1h3v3H1zM1 6h3v3H1zM1 11h3v2H1z" fill="none" stroke="#5a6c84" />
                  <path d="M6 2h10M6 7h10M6 12h10" stroke="#5a6c84" />
                </svg>
              </IconGap>
              <Caret $color="#1e395b" />
              <IconGap $m="0 21px 0 23px">
                <svg width="16" height="14" viewBox="0 0 16 14">
                  <rect x=".5" y=".5" width="15" height="13" fill="#fff" stroke="#4d7a98" />
                  <rect x="1" y="1" width="14" height="3" fill="#b7d3e6" />
                  <rect x="11" y="4" width="4" height="9" fill="#cfe2ee" />
                </svg>
              </IconGap>
              <svg width="14" height="14" viewBox="0 0 14 14">
                <circle cx="7" cy="7" r="6.500" fill="#2b5fc7" stroke="#9ab1d6" />
                <text x="7" y="11" textAnchor="middle" fontSize="10" fontWeight="700" fontFamily="Liberation Sans" fill="#fff">?</text>
              </svg>
            </CommandIcons>
          </CommandBar>

          <Panes>
            <NavPane>
              {navEntries.map(e => (
                <NavEntry key={e.label} $top={e.top} $selected={e.selected} $gap={e.gap}>
                  <NavIcon kind={e.icon} />
                  {e.label}
                </NavEntry>
              ))}
            </NavPane>
            <VScroll>
              <VThumb />
              <Chevron dir="up" />
              <Chevron dir="down" />
            </VScroll>
            <FilePane>
              <FileHead>
                Name
                <SortMark />
                <HeadDivider>D</HeadDivider>
              </FileHead>
              <FileList>
                {files.map(f => (
                  <FileRow key={f.name} $selected={f.selected}>
                    <FileGlyph>{fileIcon(f.icon)}</FileGlyph>
                    <FileName $spacing={f.spacing}>{f.name}</FileName>
                    <FileDate>{f.date || '0'}</FileDate>
                  </FileRow>
                ))}
              </FileList>
              <HScroll>
                <HThumb />
                <Chevron dir="left" />
                <Chevron dir="right" />
              </HScroll>
            </FilePane>
            <PreviewPane>No preview available.</PreviewPane>
          </Panes>

          <BottomPanel>
            <PanelRow>
              <span>File name:</span>
              <FileNameInput>key1.pem <Chevron color="#555" /></FileNameInput>
              <FilterSelect>All Files <Chevron color="#555" /></FilterSelect>
            </PanelRow>
            <PanelRow $top={7} $gap={14}>
              <DlgButton $focus>Open<SplitMark /></DlgButton>
              <DlgButton>Cancel</DlgButton>
            </PanelRow>
            <Grip width="10" height="10" viewBox="0 0 10 10">
              <path d="M8 0h2v2H8zM4 4h2v2H4zM8 4h2v2H8zM0 8h2v2H0zM4 8h2v2H4zM8 8h2v2H8z" fill="#b5b5b5" />
            </Grip>
          </BottomPanel>
        </WinContent>
      </OpenWindow>
    </Screen>
  );
}
